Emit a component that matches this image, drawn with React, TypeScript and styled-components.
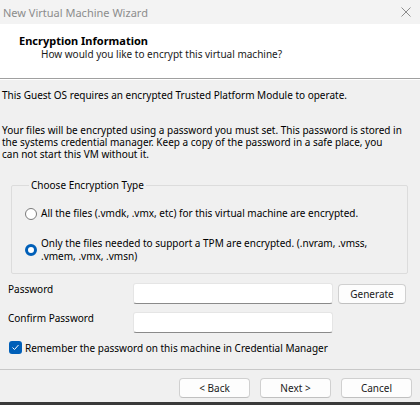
import styled, { createGlobalStyle } from 'styled-components';

const GlobalStyle = createGlobalStyle`
  html, body {
    margin: 0;
    padding: 0;
    background: #f0f0f0;
  }
  body {
    font-family: "Noto Sans", "Open Sans", sans-serif;
    font-size: 10px;
    color: #000;
  }
`;

const Window = styled.div`
  width: 420px;
  height: 405px;
  box-sizing: border-box;
  display: flex;
  flex-direction: column;
  background: #f0f0f0;
  border-bottom: 3px solid #3a3a3a;
  overflow: hidden;
`;

const TitleBar = styled.div`
  height: 24px;
  display: flex;
  align-items: center;
  justify-content: space-between;
  padding: 0 9px 0 3px;
  background: #f3f3f3;
  color: #8c8c8c;
  font-size: 11px;
`;

const Header = styled.div`
  height: 55px;
  background: #fff;
  border-bottom: 1px solid #a0a0a0;
  box-shadow: 0 1px 0 #fff;
  display: flex;
  flex-direction: column;
  padding-top: 10px;
  box-sizing: border-box;
`;

const HeaderTitle = styled.div`
  font-weight: bold;
  font-size: 11px;
  padding-left: 19px;
  line-height: 14px;
`;

const HeaderSub = styled.div`
  padding-left: 41px;
  line-height: 13px;
  color: #1a1a1a;
`;

const Body = styled.div`
  flex: 1;
  display: flex;
  flex-direction: column;
  padding: 10px 0 0 2px;
  line-height: 12px;
`;

const Para = styled.p<{ $gap?: number }>`
  margin: 0 0 ${(p) => p.$gap ?? 0}px 0;
  white-space: nowrap;
`;

const Group = styled.fieldset`
  margin: 0 12px 0 9px;
  padding: 16px 0 10px 13px;
  border: 1px solid #dcdcdc;
  border-radius: 2px;
  display: flex;
  flex-direction: column;
  gap: 17px;
`;

const Legend = styled.legend`
  padding: 0 2px;
  margin-left: 4px;
`;

const RadioRow = styled.label`
  display: flex;
  align-items: center;
  gap: 4px;
  line-height: 13px;
`;

const Radio = styled.span<{ $on?: boolean }>`
  flex: none;
  width: 12px;
  height: 12px;
  box-sizing: border-box;
  border-radius: 50%;
  border: ${(p) => (p.$on ? '3.5px solid #005fb8' : '1px solid #7a7a7a')};
  background: #fff;
`;

const FormGrid = styled.div`
  display: grid;
  grid-template-columns: 120px 200px 68px;
  column-gap: 5px;
  row-gap: 8px;
  align-items: center;
  padding: 9px 0 0 6px;
`;

const Label = styled.div`
  align-self: start;
`;

const Input = styled.div`
  height: 21px;
  box-sizing: border-box;
  background: #fff;
  border: 1px solid #e5e5e5;
  border-bottom: 1px solid #8a8a8a;
  border-radius: 3px;
`;

const Button = styled.button<{ $w?: number }>`
  width: ${(p) => p.$w ?? 71}px;
  height: 20px;
  box-sizing: border-box;
  background: #fdfdfd;
  border: 1px solid #d0d0d0;
  border-bottom-color: #c0c0c0;
  border-radius: 4px;
  font-family: inherit;
  font-size: 10px;
  color: #1a1a1a;
  padding: 0;
`;

const CheckRow = styled.label`
  display: flex;
  align-items: center;
  gap: 3px;
  padding: 8px 0 0 7px;
`;

const Check = styled.span`
  width: 13px;
  height: 13px;
  border-radius: 3px;
  background: #005fb8;
  display: flex;
  align-items: center;
  justify-content: center;
`;

const Footer = styled.div`
  height: 33px;
  border-top: 1px solid #c8c8c8;
  display: flex;
  justify-content: flex-end;
  align-items: flex-start;
  gap: 10px;
  padding: 8px 8px 0 0;
  box-sizing: border-box;
`;

export default function App() {
  return (
    <>
      <GlobalStyle />
      <Window>
        <TitleBar>
          <span>New Virtual Machine Wizard</span>
          <svg width="10" height="10" viewBox="0 0 10 10">
            <path d="M0.5 0.5 L9.5 9.5 M9.5 0.5 L0.5 9.5" stroke="#8c8c8c" strokeWidth="1" />
          </svg>
        </TitleBar>
        <Header>
          <HeaderTitle>Encryption Information</HeaderTitle>
          <HeaderSub>How would you like to encrypt this virtual machine?</HeaderSub>
        </Header>
        <Body>
          <Para $gap={23}>This Guest OS requires an encrypted Trusted Platform Module to operate.</Para>
          <Para $gap={19}>
            Your files will be encrypted using a password you must set. This password is stored in
            <br />
            the systems credential manager. Keep a copy of the password in a safe place, you
            <br />
            can not start this VM without it.
          </Para>
          <Group>
            <Legend>Choose Encryption Type</Legend>
            <RadioRow>
              <Radio />
              All the files (.vmdk, .vmx, etc) for this virtual machine are encrypted.
            </RadioRow>
            <RadioRow>
              <Radio $on />
              <span>
                Only the files needed to support a TPM are encrypted. (.nvram, .vmss,
                <br />
                .vmem, .vmx, .vmsn)
              </span>
            </RadioRow>
          </Group>
          <FormGrid>
            <Label>Password</Label>
            <Input />
            <Button $w={68}>Generate</Button>
            <Label>Confirm Password</Label>
            <Input />
            <span />
          </FormGrid>
          <CheckRow>
            <Check>
              <svg width="9" height="9" viewBox="0 0 9 9">
                <path d="M1.5 4.5 L3.5 6.5 L7.5 2" fill="none" stroke="#fff" strokeWidth="1" />
              </svg>
            </Check>
            Remember the password on this machine in Credential Manager
          </CheckRow>
        </Body>
        <Footer>
          <Button>&lt; Back</Button>
          <Button>Next &gt;</Button>
          <Button>Cancel</Button>
        </Footer>
      </Window>
    </>
  );
}
